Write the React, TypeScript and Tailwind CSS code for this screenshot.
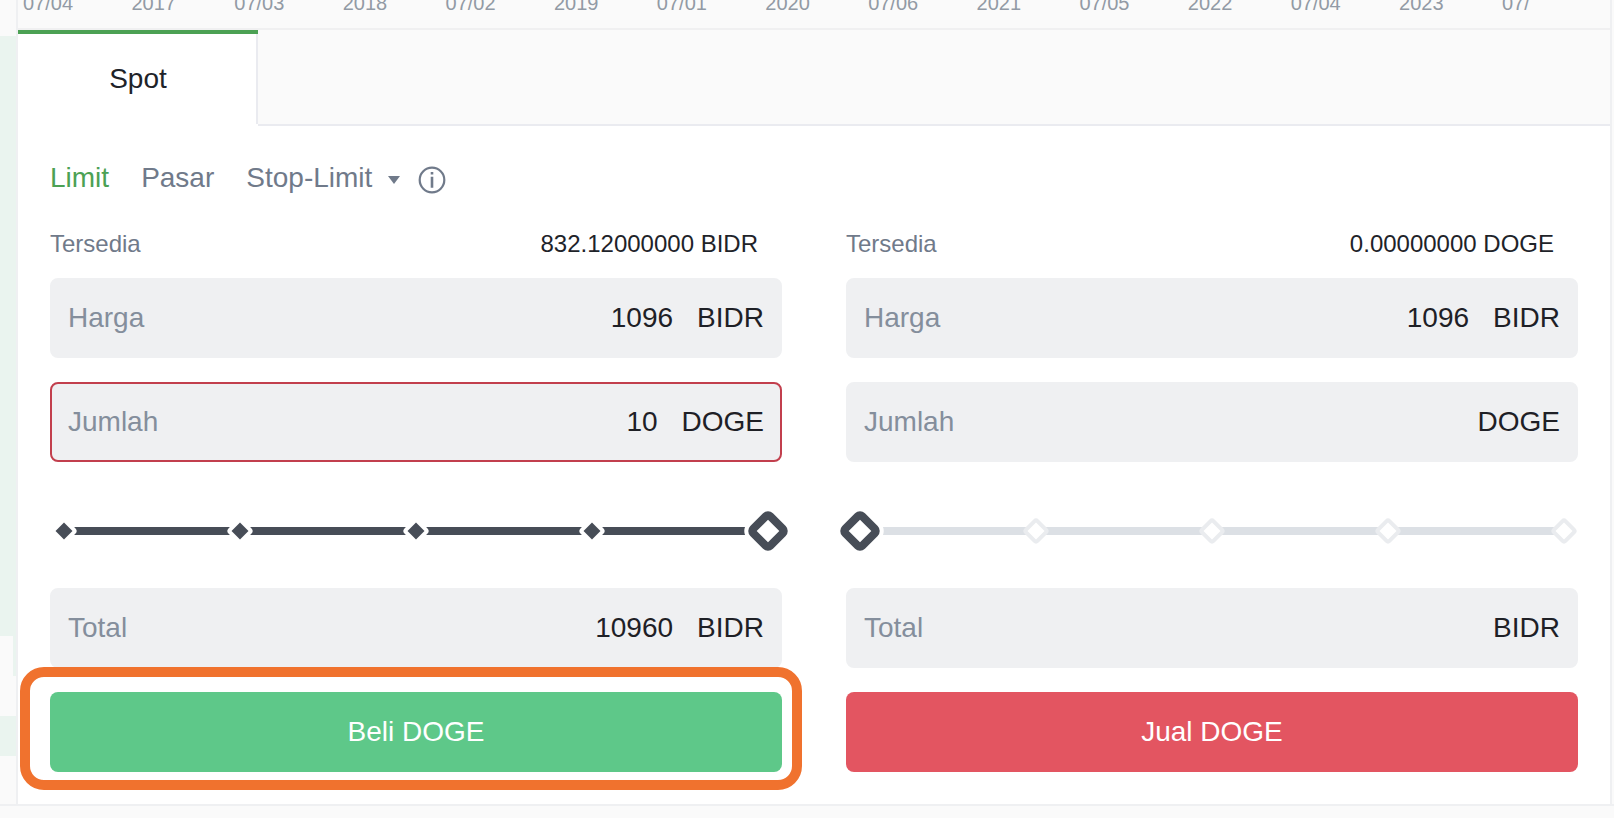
import { useId, useState } from "react";

const AXIS_LABELS = [
  "07/04", "2017", "07/03", "2018", "07/02", "2019", "07/01", "2020",
  "07/06", "2021", "07/05", "2022", "07/04", "2023",
];

const STOPS = [0, 25, 50, 75, 100];

function ChartAxis() {
  return (
    <div className="flex h-[30px] items-end justify-between overflow-hidden border-b-2 border-[#f0f0f1] bg-[#fafafa] pr-[58px] pb-[15px] pl-[5px] text-[20px] leading-5 text-[#929aa5]">
      {AXIS_LABELS.map((label, i) => (
        <span key={i}>{label}</span>
      ))}
      <span className="w-[50px]">07/</span>
    </div>
  );
}

function OrderBookDepth() {
  return (
    <div className="flex w-4 shrink-0 flex-col bg-[#fafafa]">
      <div className="mt-9 h-[600px] bg-[#eaf4ef]" />
      <div className="ml-[13px] h-10 bg-[#eaf4ef]" />
      <div className="mt-10 h-10 bg-[#eaf4ef]" />
    </div>
  );
}

function InfoIcon() {
  return (
    <svg width="28" height="28" viewBox="0 0 28 28" fill="none" aria-hidden="true">
      <circle cx="14" cy="14" r="12.3" stroke="#707a8a" strokeWidth="2.2" />
      <path d="M12.7 10.8h2.6v11h-2.6z M12.7 6h2.6v2.4h-2.6z" fill="#707a8a" />
    </svg>
  );
}

type FieldProps = { label: string; unit: string; initial: string; invalid?: boolean };

function Field({ label, unit, initial, invalid = false }: FieldProps) {
  const id = useId();
  const [value, setValue] = useState(initial);
  return (
    <div
      className={`flex h-20 items-center rounded-lg border-2 bg-[#eff0f2] px-4 text-[28px] leading-8 ${
        invalid ? "border-[#c23f4d]" : "border-[#eff0f2]"
      }`}
    >
      <label htmlFor={id} className="text-[#848e9c]">{label}</label>
      <input
        id={id}
        type="text"
        inputMode="decimal"
        value={value}
        onChange={(e) => setValue(e.target.value)}
        className="mr-6 min-w-0 flex-1 bg-transparent text-right text-[#1e2026] outline-none"
      />
      <span className="text-[#1e2026]">{unit}</span>
    </div>
  );
}

function PercentSlider({ label, initial }: { label: string; initial: number }) {
  const [value, setValue] = useState(initial);
  return (
    <div className="mt-[49px] mb-[37px] flex h-10 items-center px-[14px]">
      <div className="relative h-2 flex-1 bg-[#dce0e5]">
        <div className="h-2 bg-[#474d57]" style={{ width: `${value}%` }} />
        {STOPS.map((stop) => (
          <span
            key={stop}
            className={`absolute top-1/2 size-5 -translate-x-1/2 -translate-y-1/2 rotate-45 rounded-sm border-4 ${
              stop <= value ? "border-white bg-[#474d57]" : "border-[#eaecef] bg-white"
            }`}
            style={{ left: `${stop}%` }}
          />
        ))}
        <span
          className="absolute top-1/2 size-8 -translate-x-1/2 -translate-y-1/2 rotate-45 rounded-[7px] border-8 border-[#474d57] bg-white ring-4 ring-white"
          style={{ left: `${value}%` }}
        />
        <input
          type="range"
          min={0}
          max={100}
          value={value}
          aria-label={label}
          onChange={(e) => setValue(Number(e.target.value))}
          className="absolute -inset-x-[14px] -inset-y-4 cursor-pointer opacity-0"
        />
      </div>
    </div>
  );
}

type OrderFormProps = {
  side: "buy" | "sell";
  available: string;
  price: string;
  amount: string;
  total: string;
  percent: number;
};

function OrderForm({ side, available, price, amount, total, percent }: OrderFormProps) {
  const buy = side === "buy";
  return (
    <form className="flex flex-col" onSubmit={(e) => e.preventDefault()}>
      <div className="flex justify-between pr-6 pb-5 text-[24px] leading-7">
        <span className="text-[#707a8a]">Tersedia</span>
        <span className="text-[#1e2329]">{available}</span>
      </div>
      <div className="flex flex-col gap-6">
        <Field label="Harga" unit="BIDR" initial={price} />
        <Field label="Jumlah" unit="DOGE" initial={amount} invalid={buy} />
      </div>
      <PercentSlider label={buy ? "Persentase beli" : "Persentase jual"} initial={percent} />
      <Field label="Total" unit="BIDR" initial={total} />
      <div className="relative mt-6">
        <button
          type="submit"
          className={`h-20 w-full rounded-lg text-[28px] leading-8 text-white ${
            buy ? "bg-[#5ec889]" : "bg-[#e35561]"
          }`}
        >
          {buy ? "Beli DOGE" : "Jual DOGE"}
        </button>
        {buy && (
          <div className="pointer-events-none absolute -top-[25px] -right-5 -bottom-[18px] -left-[30px] rounded-3xl border-10 border-[#f0722e]" />
        )}
      </div>
    </form>
  );
}

export default function App() {
  return (
    <div className="min-h-screen bg-[#fafafa] font-['Liberation_Sans',Arial,sans-serif]">
      <div className="flex border-b-2 border-[#eff0f2] pr-[2px]">
        <OrderBookDepth />
        <main className="min-w-0 flex-1 border-x-2 border-[#eff0f2] bg-white">
          <ChartAxis />
          <div role="tablist" className="flex h-24">
            <button
              type="button"
              role="tab"
              aria-selected="true"
              className="flex w-60 flex-col border-t-4 border-[#4ca154] text-[28px] leading-8 text-[#1e2329]"
            >
              <span className="flex h-[90px] w-full items-center justify-center border-r-2 border-[#eaebf0] pl-[2px]">
                Spot
              </span>
            </button>
            <div className="flex-1 border-b-2 border-[#eaebf0] bg-[#fafafa]" />
          </div>
          <div className="px-8 pb-8">
            <div className="flex h-[104px] items-center text-[28px] leading-8 text-[#707a8a]">
              <button type="button" className="mr-8 text-[#4ca154]">Limit</button>
              <button type="button" className="mr-8">Pasar</button>
              <button type="button" className="mr-[18px] flex items-center gap-4">
                Stop-Limit
                <svg width="12" height="8" viewBox="0 0 12 8" className="mt-1" aria-hidden="true">
                  <path d="M0 0h12L6 8z" fill="#707a8a" />
                </svg>
              </button>
              <button type="button" aria-label="Info" className="mt-1">
                <InfoIcon />
              </button>
            </div>
            <div className="grid grid-cols-2 gap-16">
              <OrderForm
                side="buy"
                available="832.12000000 BIDR"
                price="1096"
                amount="10"
                total="10960"
                percent={100}
              />
              <OrderForm
                side="sell"
                available="0.00000000 DOGE"
                price="1096"
                amount=""
                total=""
                percent={0}
              />
            </div>
          </div>
        </main>
      </div>
    </div>
  );
}
